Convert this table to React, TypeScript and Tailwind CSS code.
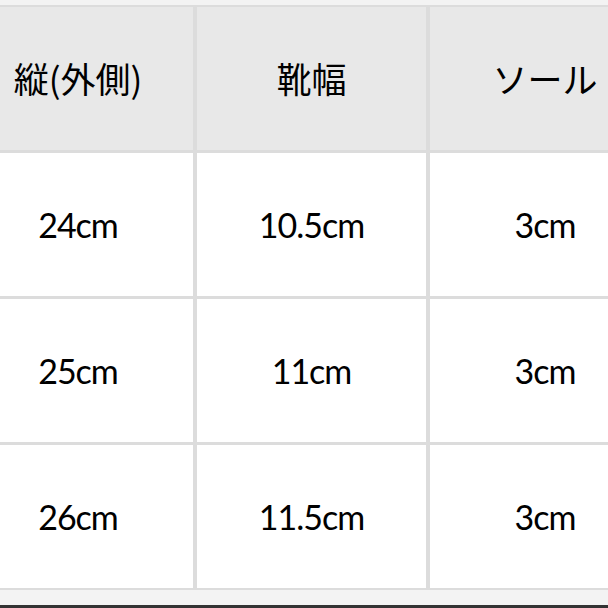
const headers = ["縦(外側)", "靴幅", "ソール"];

const rows = [
  ["24cm", "10.5cm", "3cm"],
  ["25cm", "11cm", "3cm"],
  ["26cm", "11.5cm", "3cm"],
];

export default function App() {
  return (
    <div className="w-[608px] h-[608px] overflow-hidden bg-[#f3f3f3] flex flex-col text-black">
      <div className="h-[5px] shrink-0" />
      <div className="ml-[-37px] w-[697px] border-y-2 border-[#dcdcdc] bg-[#dcdcdc] grid grid-cols-[230px_229px_230px] gap-x-[4px] gap-y-[3px] shrink-0">
        {headers.map((h) => (
          <div
            key={h}
            className="h-[143px] bg-[#e8e8e8] flex items-center justify-center text-[35px] font-['Noto_Sans_CJK_JP',sans-serif]"
          >
            {h}
          </div>
        ))}
        {rows.map((r, i) =>
          r.map((c, j) => (
            <div
              key={`${i}-${j}`}
              className="h-[143px] bg-white flex items-center justify-center text-[34px] tracking-[-1px] font-['Lato',sans-serif]"
            >
              {c}
            </div>
          ))
        )}
      </div>
      <div className="flex-1" />
      <div className="h-[3px] bg-[#333] shrink-0" />
    </div>
  );
}
